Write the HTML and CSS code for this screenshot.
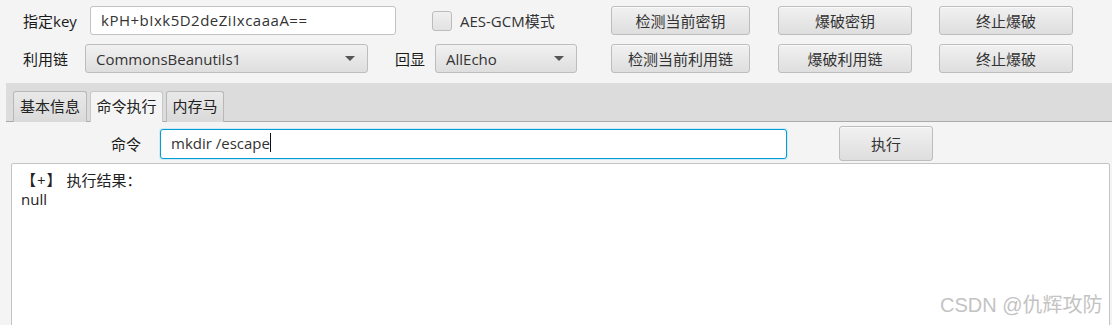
FILE: index.html
```html
<!DOCTYPE html>
<html lang="zh">
<head>
<meta charset="utf-8">
<link rel="stylesheet" href="styles.css">
</head>
<body>
<div class="app">
  <div class="top">
    <div class="row">
      <span class="lbl lbl-key">指定key</span>
      <div class="field field-key">kPH+bIxk5D2deZiIxcaaaA==</div>
      <span class="check"></span>
      <span class="check-lbl">AES-GCM模式</span>
      <button class="btn btn-a">检测当前密钥</button>
      <button class="btn btn-b">爆破密钥</button>
      <button class="btn btn-c">终止爆破</button>
    </div>
    <div class="row row2">
      <span class="lbl lbl-chain">利用链</span>
      <div class="combo combo-chain"><span>CommonsBeanutils1</span><i class="arrow"></i></div>
      <span class="lbl lbl-echo">回显</span>
      <div class="combo combo-echo"><span>AllEcho</span><i class="arrow"></i></div>
      <button class="btn btn-a">检测当前利用链</button>
      <button class="btn btn-b">爆破利用链</button>
      <button class="btn btn-c">终止爆破</button>
    </div>
  </div>
  <div class="tabbar">
    <div class="tab tab-info">基本信息</div>
    <div class="tab tab-cmd active">命令执行</div>
    <div class="tab tab-mem">内存马</div>
  </div>
  <div class="pane">
    <div class="cmd-row">
      <span class="lbl lbl-cmd">命令</span>
      <div class="field field-cmd focused">mkdir /escape<span class="caret"></span></div>
      <button class="btn btn-run">执行</button>
    </div>
    <div class="output">
      <div><span class="brk">【+】</span> 执行结果：</div>
      <div>null</div>
    </div>
  </div>
  <div class="watermark">CSDN @仇辉攻防</div>
</div>
</body>
</html>
```
FILE: styles.css
```css
* { box-sizing: border-box; }
html, body { margin: 0; padding: 0; }
body {
  width: 1112px;
  height: 325px;
  overflow: hidden;
  background: #f4f4f4;
  font-family: "Open Sans", "Noto Sans CJK SC", sans-serif;
  font-size: 15px;
  color: #333;
}
.app { position: relative; width: 1112px; height: 325px; }

.top { padding-top: 6px; height: 83px; }
.row { display: flex; align-items: center; height: 29px; }
.row2 { margin-top: 9px; height: 29px; }

.lbl { color: #1a1a1a; white-space: nowrap; }
.lbl-key { margin-left: 23px; width: 67px; }
.lbl-chain { margin-left: 23px; width: 62px; }
.lbl-echo { margin-left: 27px; width: 40px; }

.field {
  background: #fff;
  border: 1px solid #c2c2c2;
  border-radius: 3px;
  height: 29px;
  line-height: 27px;
  padding: 0 10px;
  color: #333;
  white-space: nowrap;
  overflow: hidden;
}
.field-key { width: 306px; letter-spacing: 0.5px; }

.check {
  width: 20px; height: 20px;
  margin-left: 36px;
  border: 1px solid #bcbcbc;
  border-radius: 3px;
  background: linear-gradient(#f0f0f0, #e2e2e2);
}
.check-lbl { margin-left: 8px; width: 151px; color: #333; }

.btn {
  font-family: inherit;
  font-size: 15px;
  color: #333;
  height: 29px;
  border: 1px solid #bdbdbd;
  border-radius: 3px;
  background: linear-gradient(#f1f1f1, #dedede);
  padding: 0;
  box-shadow: inset 0 1px 0 #fafafa;
}
.btn-a { width: 139px; }
.btn-b { width: 134px; margin-left: 28px; }
.btn-c { width: 134px; margin-left: 27px; }

.combo {
  display: flex;
  align-items: center;
  justify-content: space-between;
  height: 29px;
  border: 1px solid #bdbdbd;
  border-radius: 3px;
  background: linear-gradient(#f1f1f1, #dedede);
  padding: 0 10px 0 10px;
  color: #333;
}
.combo-chain { width: 283px; }
.combo-echo { width: 142px; margin-right: 34px; }
.arrow {
  width: 0; height: 0;
  border-left: 5px solid transparent;
  border-right: 5px solid transparent;
  border-top: 5px solid #555;
  margin-right: 2px;
}

.tabbar {
  margin-left: 6px;
  height: 39px;
  background: #dcdcdc;
  border-bottom: 1px solid #aaa;
  display: flex;
  align-items: flex-end;
  padding-left: 7px;
  gap: 3px;
}
.tab {
  height: 31px;
  margin-bottom: -1px;
  line-height: 29px;
  text-align: center;
  border: 1px solid #b8b8b8;
  border-bottom: none;
  border-radius: 3px 3px 0 0;
  background: linear-gradient(#e9e9e9, #dadada);
  color: #222;
}
.tab-info { width: 74px; }
.tab-cmd { width: 73px; }
.tab-mem { width: 58px; }
.tab.active { background: #f4f4f4; border-color: #c8c8c8; }

.pane { padding-top: 4px; }
.cmd-row { display: flex; align-items: center; height: 35px; }
.lbl-cmd { margin-left: 111px; width: 49px; }
.field-cmd { width: 627px; height: 30px; }
.focused {
  border: 1px solid #039ed3;
  box-shadow: 0 0 0 1px #cfe9f5;
}
.caret {
  display: inline-block;
  width: 1px; height: 19px;
  background: #111;
  vertical-align: middle;
  margin-top: -3px;
}
.btn-run { width: 94px; height: 35px; margin-left: 52px; }

.output {
  margin: 2px 2px 0 11px;
  height: 170px;
  background: #fff;
  border: 1px solid #c4c4c4;
  border-radius: 2px;
  padding: 7px 9px;
  font-size: 15px;
  line-height: 19px;
  color: #222;
}
.brk { letter-spacing: 1px; }

.watermark {
  position: absolute;
  left: 940px;
  top: 289px;
  font-family: "Liberation Sans", "Noto Sans CJK SC", sans-serif;
  font-size: 20px;
  color: #c3c3c3;
  white-space: nowrap;
}
```
